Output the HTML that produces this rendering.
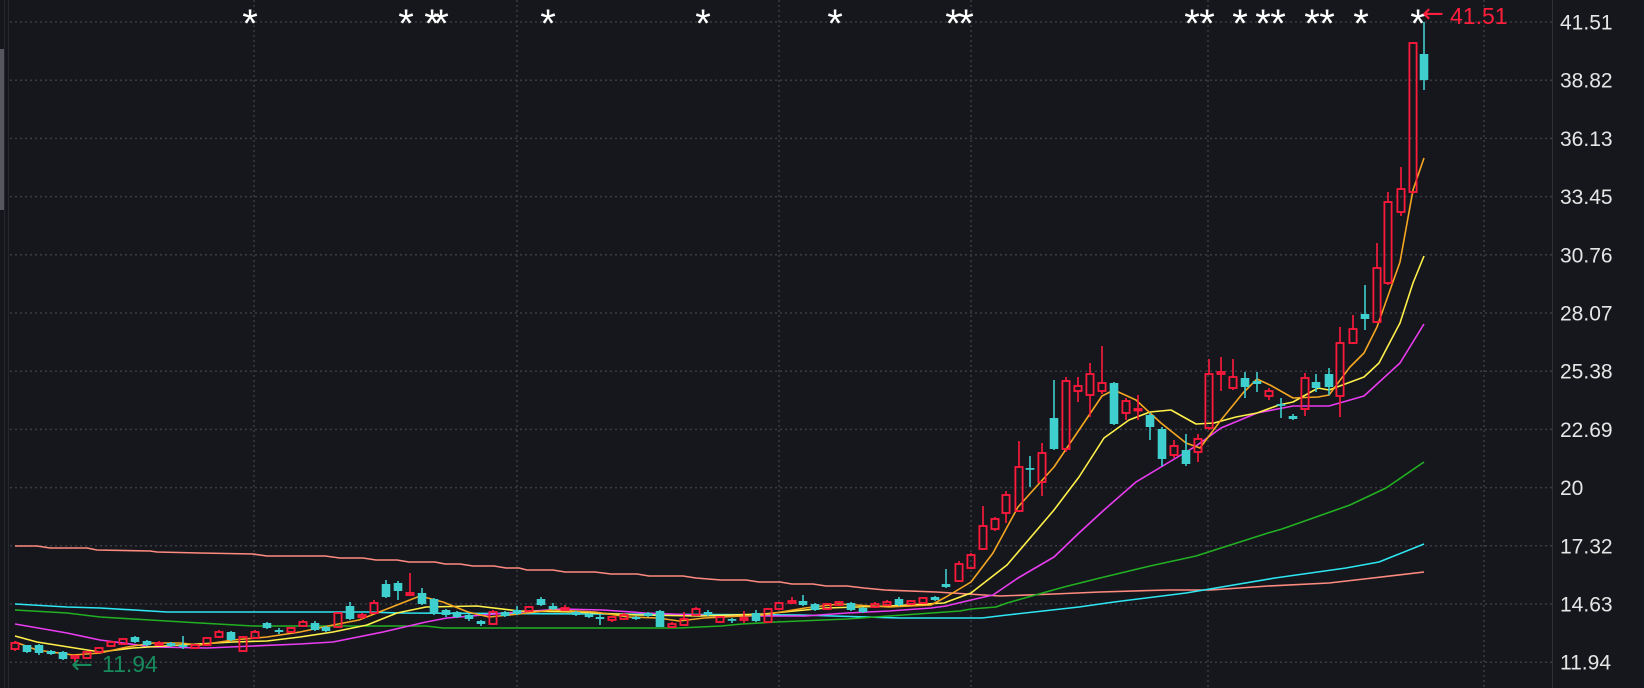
<!DOCTYPE html>
<html><head><meta charset="utf-8"><style>
html,body{margin:0;padding:0;background:#15171c;}
body{width:1644px;height:688px;overflow:hidden;position:relative;font-family:"Liberation Sans",sans-serif;}
svg{position:absolute;left:0;top:0;}
</style></head><body>
<svg id="s" width="1644" height="688" xmlns="http://www.w3.org/2000/svg">
<rect x="0" y="0" width="1644" height="688" fill="#15171c"/>
<rect x="0" y="49" width="4" height="161" fill="#55565e"/>
<line x1="4.5" y1="0" x2="4.5" y2="688" stroke="#24262b" stroke-width="1"/>
<line x1="8.5" y1="0" x2="8.5" y2="688" stroke="#26282d" stroke-width="1"/>
<line x1="1552.5" y1="0" x2="1552.5" y2="688" stroke="#2e3035" stroke-width="1"/>
<g id="grid" stroke="#3a3c42" stroke-width="1.5" stroke-dasharray="2,3"></g>
<g id="ma" fill="none" stroke-width="1.6" stroke-linejoin="round"></g>
<g id="cd"></g>
<g fill="#e6e6e6" font-size="21" font-family="Liberation Sans, sans-serif" id="ax"></g>
<g fill="#ffffff" font-size="40" font-family="Liberation Sans, sans-serif" id="st" text-anchor="middle"></g>
<text x="1450" y="24" fill="#ff1e3c" font-size="23" font-family="Liberation Sans, sans-serif">41.51</text>
<text x="1422" y="22" fill="#ff1e3c" font-size="26" font-family="DejaVu Sans, sans-serif">←</text>
<text x="71" y="673" fill="#178a5c" font-size="26" font-family="DejaVu Sans, sans-serif">←</text>
<text x="102" y="672" fill="#178a5c" font-size="23" font-family="Liberation Sans, sans-serif">11.94</text>
</svg>
<script>
var NS="http://www.w3.org/2000/svg";
function el(p,t,a){var e=document.createElementNS(NS,t);for(var k in a)e.setAttribute(k,a[k]);document.getElementById(p).appendChild(e);return e;}
var labels=["41.51","38.82","36.13","33.45","30.76","28.07","25.38","22.69","20","17.32","14.63","11.94"];
for(var k=0;k<12;k++){var y=22+58.2*k;el("grid","line",{x1:10,y1:y,x2:1552,y2:y});
var t=el("ax","text",{x:1560,y:y+7.5});t.textContent=labels[k];}
[254,517,779,971,1208,1484].forEach(function(x){el("grid","line",{x1:x,y1:0,x2:x,y2:688});});
[250,406,432,441,548,703,835,953,966,1192,1207,1240,1263,1278,1312,1327,1361,1418].forEach(function(x){var t=el("st","text",{x:x,y:37});t.textContent="*";});
var C=[
[15,643,649,641,651,'r'],[27,645,652,645,653,'g'],[39,645,653,644,655,'g'],[51,651,654,650,655,'g'],[63,652,659,651,660,'g'],
[75,656,658,655,662,'r'],[87,652,658,651,659,'r'],[99,648,652,647,653,'r'],[111,642,646,641,647,'r'],[123,639,644,638,645,'r'],
[135,637,642,636,643,'g'],[147,641,645,640,646,'g'],[159,643,645,641,646,'r'],[171,643,646,642,647,'g'],[183,645,647,636,649,'g'],
[195,645,648,644,649,'r'],[207,638,645,637,646,'r'],[219,632,637,630,638,'r'],[231,632,640,631,641,'g'],[243,637,651,636,652,'r'],
[255,632,638,630,639,'r'],[267,623,628,622,629,'g'],[279,630,632,628,634,'g'],[291,628,632,627,633,'r'],[303,622,626,620,627,'r'],
[315,623,630,621,631,'g'],[326,627,631,626,632,'g'],[338,613,627,612,628,'r'],[350,606,619,602,620,'g'],[362,615,617,613,619,'r'],
[374,603,613,600,614,'r'],[386,584,597,580,598,'g'],[398,583,591,581,600,'g'],[410,593,595,573,596,'r'],[422,593,604,588,605,'g'],
[434,599,614,598,615,'g'],[446,610,615,609,617,'g'],[457,612,617,611,618,'g'],[469,615,619,614,621,'g'],[481,621,624,620,626,'g'],
[493,612,624,610,625,'r'],[505,612,616,611,617,'g'],[517,610,614,606,615,'g'],[529,607,611,606,612,'r'],[541,599,605,597,606,'g'],
[553,606,609,603,610,'g'],[565,608,610,605,611,'r'],[576,612,615,611,616,'g'],[589,614,617,613,618,'g'],[600,617,619,614,625,'g'],
[612,617,620,616,622,'r'],[624,615,619,613,620,'r'],[636,617,619,616,620,'g'],[648,613,616,612,617,'g'],[660,611,627,610,627,'g'],
[672,624,627,622,628,'r'],[684,619,625,612,626,'r'],[696,609,615,607,616,'r'],[708,612,615,610,616,'g'],[720,617,622,616,623,'r'],
[732,619,620,618,623,'g'],[744,618,620,611,623,'r'],[756,613,621,610,622,'g'],[768,609,622,608,623,'r'],[779,603,609,602,610,'r'],
[792,601,603,597,604,'r'],[803,601,605,595,606,'g'],[815,604,610,603,611,'g'],[827,604,609,603,610,'r'],[839,602,605,601,606,'r'],
[851,603,610,602,611,'g'],[863,608,612,607,613,'g'],[875,604,607,602,608,'r'],[887,602,605,600,606,'r'],[899,599,605,597,606,'g'],
[911,601,604,600,605,'r'],[923,598,603,597,604,'r'],[935,597,600,596,601,'g'],[946,584,587,569,588,'g'],[959,564,581,561,582,'r'],
[971,555,568,553,569,'r'],[983,526,549,506,550,'r'],[995,519,529,517,531,'r'],[1006,495,513,491,523,'r'],[1019,467,511,441,512,'r'],
[1030,468,469,456,487,'g'],[1042,453,482,443,496,'r'],[1054,418,449,380,450,'g'],[1066,381,449,377,452,'r'],[1078,386,391,377,402,'r'],
[1090,374,395,363,417,'r'],[1102,383,391,346,394,'r'],[1114,383,424,382,425,'g'],[1126,401,413,398,420,'r'],[1138,409,410,395,420,'r'],
[1150,415,427,413,440,'g'],[1162,429,459,427,466,'g'],[1174,446,455,440,458,'r'],[1186,450,464,434,466,'g'],[1198,439,452,434,462,'r'],
[1209,374,428,359,430,'r'],[1221,372,374,357,391,'r'],[1233,377,388,359,390,'r'],[1245,378,387,372,398,'g'],[1257,381,384,372,392,'g'],
[1269,391,396,388,400,'r'],[1281,404,405,398,418,'g'],[1293,416,419,414,420,'g'],[1305,378,409,373,416,'r'],[1316,382,388,374,392,'g'],
[1329,374,387,368,395,'g'],[1340,343,396,327,417,'r'],[1353,329,343,315,344,'r'],[1365,314,319,285,330,'g'],[1377,268,322,243,323,'r'],
[1388,202,283,192,285,'r'],[1401,189,212,167,216,'r'],[1413,43,192,42,194,'r'],[1424,54,80,22,90,'g']];
C.forEach(function(c){var x=c[0],col=c[5]=='r'?'#ff1a3c':'#3fcfcf';
if(c[5]=='r'){el("cd","line",{x1:x,y1:c[3],x2:x,y2:c[1],stroke:col,"stroke-width":1.6});
el("cd","line",{x1:x,y1:c[2],x2:x,y2:c[4],stroke:col,"stroke-width":1.6});
var h=Math.max(c[2]-c[1],1.5);el("cd","rect",{x:x-3.6,y:c[1],width:7.2,height:h,fill:"none",stroke:col,"stroke-width":1.8});}
else{el("cd","line",{x1:x,y1:c[3],x2:x,y2:c[4],stroke:col,"stroke-width":1.6});
el("cd","rect",{x:x-4.3,y:c[1],width:8.6,height:Math.max(c[2]-c[1],1.8),fill:col});}});
var M={
"#ff8a80":[[15,546],[37,546],[50,548],[87,548],[97,550],[150,551],[157,552],[200,553],[253,554],[267,556],[325,556],[340,558],[363,558],[376,560],[397,560],[409,562],[435,562],[445,564],[460,564],[473,566],[494,566],[506,568],[519,568],[527,570],[553,570],[565,572],[595,572],[611,574],[637,574],[649,576],[683,576],[696,578],[721,580],[746,580],[759,582],[780,582],[792,584],[813,584],[826,586],[847,586],[864,588],[885,590],[936,592],[1000,596],[1054,594],[1100,592],[1168,590],[1211,590],[1268,586],[1329,583],[1364,579],[1424,572]],
"#2ee6f2":[[15,604],[67,607],[100,608],[167,612],[367,612],[400,613],[600,614],[800,615],[900,618],[982,618],[1007,615],[1079,607],[1114,602],[1186,593],[1275,578],[1346,568],[1379,562],[1424,544]],
"#22b022":[[15,610],[67,613],[100,617],[200,623],[253,626],[426,626],[443,628],[679,628],[721,626],[742,624],[776,622],[847,619],[889,616],[960,611],[971,609],[996,607],[1007,603],[1064,587],[1100,578],[1150,566],[1196,556],[1268,533],[1282,529],[1350,505],[1386,488],[1424,462]],
"#ea3cf0":[[15,624],[67,633],[100,640],[153,647],[207,648],[253,646],[300,644],[333,642],[383,632],[426,622],[447,618],[519,612],[561,609],[603,610],[645,613],[721,616],[805,616],[847,613],[889,611],[931,608],[946,606],[971,600],[993,595],[1018,578],[1054,557],[1079,533],[1104,510],[1136,482],[1161,467],[1196,446],[1221,428],[1257,413],[1293,406],[1329,406],[1364,396],[1400,363],[1424,324]],
"#fff04a":[[15,636],[37,642],[100,652],[133,648],[180,645],[233,642],[267,641],[300,637],[333,632],[367,625],[397,613],[426,607],[477,606],[519,611],[574,612],[637,615],[700,616],[763,614],[826,608],[889,606],[944,603],[971,593],[1007,565],[1054,510],[1079,477],[1104,438],[1129,420],[1150,412],[1171,410],[1196,424],[1214,423],[1236,417],[1257,413],[1279,405],[1293,402],[1318,388],[1329,390],[1364,377],[1379,363],[1400,323],[1413,283],[1424,256]],
"#f5a623":[[15,642],[37,650],[73,655],[100,653],[127,647],[153,643],[180,643],[200,645],[233,640],[267,637],[300,632],[333,625],[359,620],[397,605],[420,596],[443,602],[468,612],[489,617],[519,614],[552,610],[595,612],[628,617],[658,618],[679,621],[704,618],[763,615],[805,608],[839,604],[889,607],[931,605],[946,597],[971,582],[993,553],[1018,507],[1054,467],[1079,430],[1102,396],[1114,390],[1136,400],[1161,423],[1186,443],[1200,448],[1221,420],[1243,393],[1257,379],[1270,385],[1293,398],[1318,397],[1329,395],[1350,367],[1364,353],[1377,327],[1400,262],[1413,190],[1424,158]]};
for(var c in M){el("ma","polyline",{points:M[c].map(function(p){return p.join(",")}).join(" "),stroke:c});}
</script>
</body></html>
